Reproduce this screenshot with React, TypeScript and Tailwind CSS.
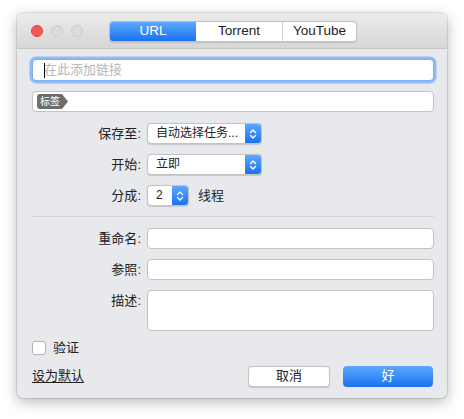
import React from 'react';

const font = { fontFamily: '"Liberation Sans", "Noto Sans CJK SC", sans-serif' };

const Chevrons: React.FC = () => (
  <svg width="8" height="12" viewBox="0 0 8 12" fill="none" stroke="white" strokeWidth="1.4" strokeLinecap="round" strokeLinejoin="round">
    <path d="M1.5 4.5 L4 2 L6.5 4.5" />
    <path d="M1.5 7.5 L4 10 L6.5 7.5" />
  </svg>
);

const Select: React.FC<{ value: string; width: string }> = ({ value, width }) => (
  <div className={`${width} h-[21px] flex rounded-[4px] bg-white border border-[#c4c4c4] shadow-[0_0.5px_1px_rgba(0,0,0,0.15)] overflow-hidden`}>
    <div className="flex-1 pl-[8px] text-[12px] leading-[19px] text-[#222] truncate">{value}</div>
    <div className="w-[16px] flex items-center justify-center bg-gradient-to-b from-[#5aa8ff] to-[#1a72f0]">
      <Chevrons />
    </div>
  </div>
);

const Field: React.FC<{ className?: string }> = ({ className = 'h-[21px]' }) => (
  <div className={`flex-1 ${className} bg-white border border-[#c3c3c3] rounded-[4px]`} />
);

const Row: React.FC<{ label: string; children: React.ReactNode; top?: boolean }> = ({ label, children, top }) => (
  <div className={`flex ${top ? 'items-start' : 'items-center'}`}>
    <div className={`w-[115px] pr-[6px] text-right text-[13px] text-[#222] ${top ? 'pt-[1px]' : ''}`}>{label}:</div>
    {children}
  </div>
);

export default function App() {
  return (
    <div className="w-[464px] h-[419px] bg-white pt-[13px] pl-[17px]" style={font}>
      <div className="w-[430px] h-[385px] rounded-[5px] overflow-hidden shadow-[0_4px_14px_rgba(0,0,0,0.28),0_0_0_0.5px_rgba(0,0,0,0.2)] flex flex-col bg-[#e8e9ec]">
        {/* title bar */}
        <div className="h-[36px] flex items-center bg-gradient-to-b from-[#ececec] to-[#d6d6d6] border-b border-[#c8c8c8] relative">
          <div className="flex gap-[8px] pl-[14px]">
            <div className="w-[12px] h-[12px] rounded-full bg-[#f25a52] border border-[#e0443e]" />
            <div className="w-[12px] h-[12px] rounded-full bg-[#dcdcdc] border border-[#cdcdcd]" />
            <div className="w-[12px] h-[12px] rounded-full bg-[#dcdcdc] border border-[#cdcdcd]" />
          </div>
          <div className="absolute left-[92px] top-[8px] flex h-[21px] rounded-[4px] border border-[#c2c2c2] overflow-hidden bg-white text-[13.5px] shadow-[0_0.5px_1px_rgba(0,0,0,0.12)]">
            <div className="w-[86px] flex items-center justify-center text-white bg-gradient-to-b from-[#5ba9ff] to-[#176ff0]">URL</div>
            <div className="w-[87px] flex items-center justify-center text-[#222] border-r border-[#d0d0d0]">Torrent</div>
            <div className="w-[73px] flex items-center justify-center text-[#222]">YouTube</div>
          </div>
        </div>

        {/* body */}
        <div className="flex-1 flex flex-col pl-[15px] pr-[13px] pt-[10px]">
          <div className="h-[22px] rounded-[4px] bg-white border border-[#7eaef0] shadow-[0_0_0_2.5px_#8fbcf5] flex items-center pl-[11px]">
            <div className="w-px h-[15px] bg-black" />
            <span className="text-[13px] text-[#b6b6b6] -ml-px">在此添加链接</span>
          </div>

          <div className="mt-[10px] h-[21px] bg-white border border-[#c3c3c3] rounded-[4px] flex items-center pl-[4px]">
            <div className="flex items-center h-[15px]">
              <div className="h-[15px] bg-[#6e6e6e] rounded-l-[3px] pl-[3px] pr-[2px] text-[10px] leading-[15px] text-white">标签</div>
              <svg width="6" height="15" viewBox="0 0 6 15"><path d="M0 0 L6 7.5 L0 15 Z" fill="#6e6e6e" /></svg>
            </div>
          </div>

          <div className="mt-[11px] flex flex-col gap-[10px]">
            <Row label="保存至">
              <Select value="自动选择任务..." width="w-[115px]" />
            </Row>
            <Row label="开始">
              <Select value="立即" width="w-[115px]" />
            </Row>
            <Row label="分成">
              <Select value="2" width="w-[42px]" />
              <span className="ml-[9px] text-[13px] text-[#222]">线程</span>
            </Row>
          </div>

          <div className="mt-[10px] mb-[11px] h-px bg-[#d4d5d8]" />

          <div className="flex flex-col gap-[10px]">
            <Row label="重命名"><Field /></Row>
            <Row label="参照"><Field /></Row>
            <Row label="描述" top><Field className="h-[41px]" /></Row>
          </div>

          <div className="mt-[7px] flex items-center gap-[7px]">
            <div className="w-[14px] h-[14px] rounded-[3px] bg-white border border-[#b5b5b5]" />
            <span className="text-[13px] text-[#222]">验证</span>
          </div>

          <div className="mt-[8px] flex items-center">
            <span className="text-[13px] text-[#222] underline underline-offset-2">设为默认</span>
            <div className="ml-auto flex gap-[13px] mr-px">
              <div className="w-[82px] h-[21px] rounded-[4px] bg-white border border-[#c4c4c4] shadow-[0_0.5px_1px_rgba(0,0,0,0.15)] flex items-center justify-center text-[13px] text-[#222]">取消</div>
              <div className="w-[90px] h-[21px] rounded-[4px] bg-gradient-to-b from-[#5aa8ff] to-[#1a72f0] flex items-center justify-center text-[13px] text-white">好</div>
            </div>
          </div>
        </div>
      </div>
    </div>
  );
}
